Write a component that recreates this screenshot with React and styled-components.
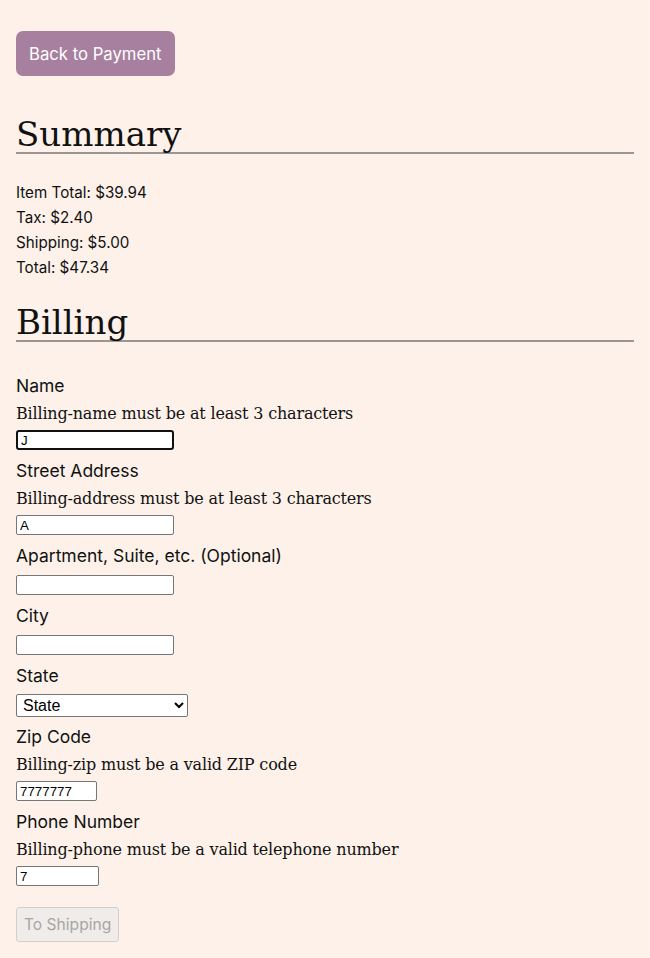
import React from "react";
import styled, { createGlobalStyle } from "styled-components";

const GlobalStyle = createGlobalStyle`
  html, body {
    margin: 0;
    padding: 0;
    background: #fdf1ea;
  }
  body {
    font-family: Inter, "Open Sans", sans-serif;
    color: #111;
  }
`;

const Page = styled.div`
  padding: 31px 16px 16px;
  display: flex;
  flex-direction: column;
  align-items: flex-start;
`;

const BackButton = styled.button`
  height: 45px;
  padding: 0 13px;
  border: none;
  border-radius: 7px;
  background: #a8809f;
  color: #fff;
  font-family: Inter, "Open Sans", sans-serif;
  font-size: 16.7px;
  cursor: pointer;
`;

const Heading = styled.h2`
  align-self: stretch;
  margin: ${(p) => p.$top}px 0 0;
  font-family: "DejaVu Serif", serif;
  font-weight: normal;
  font-size: 34px;
  line-height: 36px;
  border-bottom: 2px solid #9a9696;
`;

const Lines = styled.div`
  margin-top: 26px;
  font-size: 15.2px;
  line-height: 25px;
`;

const Form = styled.form`
  margin-top: 32px;
  display: flex;
  flex-direction: column;
  align-items: flex-start;
  gap: 9px;
`;

const Field = styled.div`
  display: flex;
  flex-direction: column;
  align-items: flex-start;
`;

const Label = styled.label`
  font-size: 17.5px;
  line-height: 24px;
  margin-bottom: 4px;
`;

const Error = styled.div`
  font-family: "DejaVu Serif", serif;
  font-size: 16px;
  letter-spacing: -0.18px;
  line-height: 24px;
  margin-bottom: 1px;
`;

const Input = styled.input`
  box-sizing: border-box;
  margin-top: 3px;
  width: ${(p) => p.$w || 158}px;
  height: 20px;
  padding: 1px 3px;
  border: ${(p) => (p.$focused ? "2px solid #101010" : "1px solid #767676")};
  border-radius: ${(p) => (p.$focused ? 3 : 2)}px;
  background: #fff;
  font-family: Arial, "Liberation Sans", sans-serif;
  font-size: 13.33px;
  color: #000;
  outline: none;
`;

const Select = styled.select`
  box-sizing: border-box;
  margin-top: 2px;
  margin-bottom: -1px;
  width: 172px;
  height: 23px;
  padding: 0 2px;
  border: 1px solid #767676;
  border-radius: 2px;
  background: #fff;
  font-family: Arial, "Liberation Sans", sans-serif;
  font-size: 16px;
  color: #000;
`;

const NextButton = styled.button`
  margin-top: 12px;
  height: 35px;
  padding: 0 7px;
  border: 1px solid #d2cfcd;
  border-radius: 3px;
  background: #efecea;
  color: #a9a6a4;
  font-family: Inter, "Open Sans", sans-serif;
  font-size: 15.6px;
`;

const fields = [
  { label: "Name", error: "Billing-name must be at least 3 characters", value: "J", focused: true },
  { label: "Street Address", error: "Billing-address must be at least 3 characters", value: "A" },
  { label: "Apartment, Suite, etc. (Optional)", value: "" },
  { label: "City", value: "" },
  { label: "State", select: true },
  { label: "Zip Code", error: "Billing-zip must be a valid ZIP code", value: "7777777", w: 81 },
  { label: "Phone Number", error: "Billing-phone must be a valid telephone number", value: "7", w: 83 },
];

export default function App() {
  return (
    <>
      <GlobalStyle />
      <Page>
        <BackButton>Back to Payment</BackButton>
        <Heading $top={40}>Summary</Heading>
        <Lines>
          <div>Item Total: $39.94</div>
          <div>Tax: $2.40</div>
          <div>Shipping: $5.00</div>
          <div>Total: $47.34</div>
        </Lines>
        <Heading $top={24}>Billing</Heading>
        <Form onSubmit={(e) => e.preventDefault()}>
          {fields.map((f) => (
            <Field key={f.label}>
              <Label>{f.label}</Label>
              {f.error && <Error>{f.error}</Error>}
              {f.select ? (
                <Select defaultValue="">
                  <option value="">State</option>
                </Select>
              ) : (
                <Input defaultValue={f.value} $w={f.w} $focused={f.focused} />
              )}
            </Field>
          ))}
          <NextButton type="submit" disabled>
            To Shipping
          </NextButton>
        </Form>
      </Page>
    </>
  );
}
